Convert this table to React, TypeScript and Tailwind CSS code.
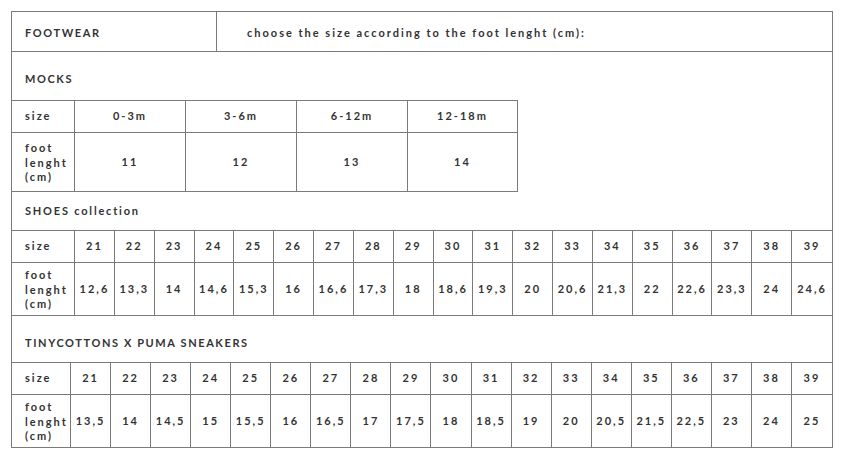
import React from 'react'

const font = { fontFamily: 'Lato, "Liberation Sans", sans-serif' }

const mocks = [
  { size: '0-3m', foot: '11' },
  { size: '3-6m', foot: '12' },
  { size: '6-12m', foot: '13' },
  { size: '12-18m', foot: '14' },
]

const shoeSizes = ['21', '22', '23', '24', '25', '26', '27', '28', '29', '30', '31', '32', '33', '34', '35', '36', '37', '38', '39']
const shoeFoot = ['12,6', '13,3', '14', '14,6', '15,3', '16', '16,6', '17,3', '18', '18,6', '19,3', '20', '20,6', '21,3', '22', '22,6', '23,3', '24', '24,6']
const sneakerFoot = ['13,5', '14', '14,5', '15', '15,5', '16', '16,5', '17', '17,5', '18', '18,5', '19', '20', '20,5', '21,5', '22,5', '23', '24', '25']

function FootLabel() {
  return (
    <div className="flex flex-col leading-[14.5px]">
      <span>foot</span>
      <span>lenght</span>
      <span>(cm)</span>
    </div>
  )
}

function SizeGrid({ cols, foot }: { cols: string; foot: string[] }) {
  return (
    <div className={`grid ${cols} border-t border-[#7a7a7a]`}>
      <div className="h-[32px] flex items-center pl-[13px] border-r border-b border-[#7a7a7a]">size</div>
      {shoeSizes.map((s, i) => (
        <div
          key={s}
          className={`h-[32px] flex items-center justify-center border-b border-[#7a7a7a] ${i < shoeSizes.length - 1 ? 'border-r' : ''}`}
        >
          {s}
        </div>
      ))}
      <div className="h-[52px] flex items-center pl-[13px] pt-[2px] border-r border-[#7a7a7a]">
        <FootLabel />
      </div>
      {foot.map((f, i) => (
        <div
          key={i}
          className={`h-[52px] flex items-center justify-center border-[#7a7a7a] ${i < foot.length - 1 ? 'border-r' : ''}`}
        >
          {f}
        </div>
      ))}
    </div>
  )
}

export default function App() {
  return (
    <div className="bg-white w-[843px] h-[459px] pt-[11px] pl-[11px] text-[#333] text-[11px] font-bold tracking-[2px]" style={font}>
      <div className="w-[822px] border border-[#7a7a7a]">
        <div className="flex h-[40px] border-b border-[#7a7a7a]">
          <div className="w-[205px] border-r border-[#7a7a7a] flex items-center pl-[13px] pt-[3px] tracking-[1.6px]">FOOTWEAR</div>
          <div className="flex-1 flex items-center pl-[30px] pt-[3px] tracking-[2px]">
            choose the size according to the foot lenght (cm):
          </div>
        </div>

        <div className="h-[48px] flex items-end pl-[13px] pb-[15px] leading-[12px] tracking-[1.6px]">MOCKS</div>
        <div className="w-[506px] border-t border-r border-b border-[#7a7a7a]">
          <div className="grid grid-cols-[63px_111px_111px_111px_1fr] h-[32px] border-b border-[#7a7a7a]">
            <div className="flex items-center pl-[13px] border-r border-[#7a7a7a]">size</div>
            {mocks.map((m, i) => (
              <div key={m.size} className={`flex items-center justify-center border-[#7a7a7a] ${i < 3 ? 'border-r' : ''}`}>
                {m.size}
              </div>
            ))}
          </div>
          <div className="grid grid-cols-[63px_111px_111px_111px_1fr] h-[58px]">
            <div className="flex items-center pl-[13px] pt-[2px] border-r border-[#7a7a7a]">
              <FootLabel />
            </div>
            {mocks.map((m, i) => (
              <div key={m.size} className={`flex items-center justify-center border-[#7a7a7a] ${i < 3 ? 'border-r' : ''}`}>
                {m.foot}
              </div>
            ))}
          </div>
        </div>

        <div className="h-[38px] flex items-end pl-[13px] pb-[13px] leading-[12px] tracking-[1.8px]">SHOES collection</div>
        <SizeGrid cols="grid-cols-[63px_repeat(19,1fr)]" foot={shoeFoot} />
        <div className="h-[47px] flex items-end pl-[13px] pb-[13px] leading-[12px] tracking-[1.6px] border-t border-[#7a7a7a]">
          TINYCOTTONS X PUMA SNEAKERS
        </div>
        <SizeGrid cols="grid-cols-[59px_repeat(19,1fr)]" foot={sneakerFoot} />
      </div>
    </div>
  )
}
